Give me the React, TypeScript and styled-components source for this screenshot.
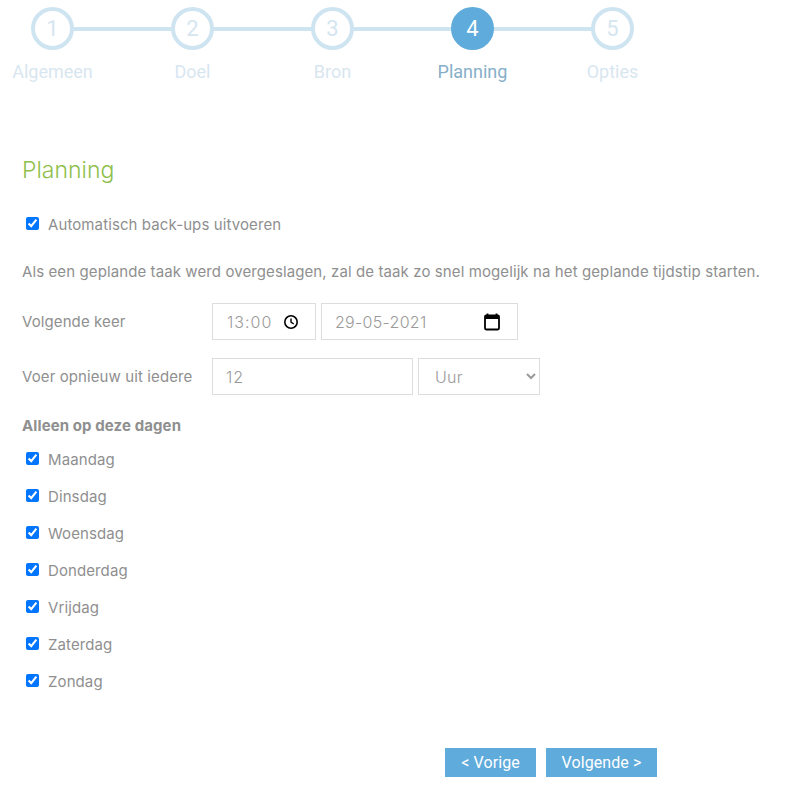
import React from 'react';
import styled, { createGlobalStyle } from 'styled-components';

const Global = createGlobalStyle`
  html, body { margin: 0; padding: 0; background: #fff; }
  body { font-family: Inter, "Liberation Sans", sans-serif; font-size: 15px; letter-spacing: 0.1px; color: #8f8f8f; }
`;

const Page = styled.div`
  width: 809px;
  height: 798px;
  overflow: hidden;
  box-sizing: border-box;
`;

const Stepper = styled.ol`
  display: flex;
  list-style: none;
  margin: 7px 0 0 -17.5px;
  padding: 0;
  letter-spacing: 0;
`;

const Step = styled.li<{ $last?: boolean }>`
  position: relative;
  width: 140px;
  display: flex;
  flex-direction: column;
  align-items: center;
  &::after {
    content: ${p => (p.$last ? 'none' : '""')};
    position: absolute;
    left: 70px;
    top: 20px;
    width: 140px;
    height: 4px;
    background: #cfe4f1;
  }
`;

const Circle = styled.span<{ $active?: boolean }>`
  position: relative;
  z-index: 1;
  box-sizing: border-box;
  width: 43px;
  height: 43px;
  border-radius: 50%;
  display: flex;
  align-items: center;
  justify-content: center;
  background: ${p => (p.$active ? '#5fabdb' : '#fff')};
  border: 4px solid ${p => (p.$active ? '#5fabdb' : '#cfe4f1')};
  color: ${p => (p.$active ? '#fff' : '#d5e6f1')};
  font-family: Roboto, sans-serif;
  font-size: 22px;
`;

const StepLabel = styled.span<{ $active?: boolean }>`
  margin-top: 11px;
  font-family: Roboto, sans-serif;
  font-size: 18px;
  line-height: 22px;
  color: ${p => (p.$active ? '#86afc9' : '#d8e6f0')};
`;

const Form = styled.form`
  padding: 0 0 0 22px;
`;

const Title = styled.h2`
  margin: 71px 0 0;
  font-size: 23px;
  line-height: 32px;
  font-weight: 300;
  letter-spacing: 0;
  color: #8fbf4d;
`;

const CheckRow = styled.label`
  display: flex;
  align-items: center;
  height: 37px;
  line-height: 20px;
`;

const Check = styled.input.attrs({ type: 'checkbox' })`
  width: 13px;
  height: 13px;
  margin: 0 9px 2px 4px;
`;

const Notice = styled.p`
  margin: 19px 0 0;
  line-height: 20px;
  white-space: nowrap;
`;

const FieldRow = styled.div`
  display: flex;
  align-items: center;
  gap: 5px;
  height: 37px;
`;

const FieldLabel = styled.label`
  width: 185px;
  flex: none;
`;

const boxBase = `
  box-sizing: border-box;
  height: 37px;
  border: 1px solid #ddd;
  border-radius: 0;
  background: #fff;
  color: #9a9a9a;
  font-family: Inter, sans-serif;
  font-size: 16px;
  font-weight: 300;
  letter-spacing: 0.3px;
  outline: none;
`;

const PickerField = styled.div<{ $width: number; $iconGap: number; $inset: number; $tracking: number }>`
  ${boxBase}
  width: ${p => p.$width}px;
  display: flex;
  align-items: center;
  letter-spacing: ${p => p.$tracking}px;
  padding: 0 ${p => p.$iconGap}px 0 ${p => p.$inset}px;
`;

const PickerInput = styled.input`
  flex: 1;
  min-width: 0;
  border: none;
  outline: none;
  padding: 0;
  background: none;
  color: inherit;
  font: inherit;
  letter-spacing: inherit;
`;

const NumInput = styled.input`
  ${boxBase}
  width: 201px;
  padding: 0 13px;
  letter-spacing: 1px;
`;

const Select = styled.select`
  ${boxBase}
  width: 122px;
  padding: 0 12px;
`;

const Section = styled.div<{ $top: number }>`
  margin-top: ${p => p.$top}px;
`;

const DaysTitle = styled.div`
  font-weight: 700;
  font-size: 15px;
  line-height: 20px;
  margin-bottom: 5px;
`;

const Buttons = styled.div`
  display: flex;
  gap: 10px;
  margin: 48px 0 0 423px;
`;

const Button = styled.button<{ $width: number }>`
  width: ${p => p.$width}px;
  height: 29px;
  border: none;
  background: #5fabdb;
  color: #fff;
  font-family: Roboto, sans-serif;
  font-size: 16px;
  letter-spacing: 0.1px;
  padding: 0;
`;

const ClockIcon = () => (
  <svg width="16" height="16" viewBox="0 0 16 16" fill="none" stroke="#000" aria-hidden="true">
    <circle cx="8" cy="8" r="6.2" strokeWidth="1.6" />
    <path d="M8 4.4V8.2L10.8 10" strokeWidth="1.4" />
  </svg>
);

const CalendarIcon = () => (
  <svg width="16" height="18" viewBox="0 0 16 18" fill="none" aria-hidden="true">
    <path d="M3.5 0.5V3M12.5 0.5V3" stroke="#000" strokeWidth="1.8" />
    <rect x="1" y="2.5" width="14" height="14" rx="1.2" stroke="#000" strokeWidth="1.8" />
    <rect x="1" y="2.5" width="14" height="3.5" fill="#000" />
  </svg>
);

const steps = ['Algemeen', 'Doel', 'Bron', 'Planning', 'Opties'];
const days = ['Maandag', 'Dinsdag', 'Woensdag', 'Donderdag', 'Vrijdag', 'Zaterdag', 'Zondag'];

export default function App() {
  return (
    <Page>
      <Global />
      <Stepper>
        {steps.map((s, i) => (
          <Step key={s} $last={i === steps.length - 1}>
            <Circle $active={i === 3}>{i + 1}</Circle>
            <StepLabel $active={i === 3}>{s}</StepLabel>
          </Step>
        ))}
      </Stepper>
      <Form onSubmit={e => e.preventDefault()}>
        <Title>Planning</Title>
        <Section $top={20}>
          <CheckRow><Check defaultChecked />Automatisch back-ups uitvoeren</CheckRow>
        </Section>
        <Notice>Als een geplande taak werd overgeslagen, zal de taak zo snel mogelijk na het geplande tijdstip starten.</Notice>
        <Section $top={21}>
          <FieldRow>
            <FieldLabel>Volgende keer</FieldLabel>
            <PickerField $width={104} $iconGap={16} $inset={14} $tracking={1}>
              <PickerInput defaultValue="13:00" />
              <ClockIcon />
            </PickerField>
            <PickerField $width={197} $iconGap={17} $inset={13} $tracking={0.3}>
              <PickerInput defaultValue="29-05-2021" />
              <CalendarIcon />
            </PickerField>
          </FieldRow>
        </Section>
        <Section $top={18}>
          <FieldRow>
            <FieldLabel>Voer opnieuw uit iedere</FieldLabel>
            <NumInput type="text" defaultValue="12" />
            <Select defaultValue="Uur"><option>Uur</option><option>Dag</option></Select>
          </FieldRow>
        </Section>
        <Section $top={21}>
          <DaysTitle>Alleen op deze dagen</DaysTitle>
          {days.map(d => (
            <CheckRow key={d}><Check defaultChecked />{d}</CheckRow>
          ))}
        </Section>
        <Buttons>
          <Button type="button" $width={91}>&lt; Vorige</Button>
          <Button type="button" $width={111}>Volgende &gt;</Button>
        </Buttons>
      </Form>
    </Page>
  );
}
